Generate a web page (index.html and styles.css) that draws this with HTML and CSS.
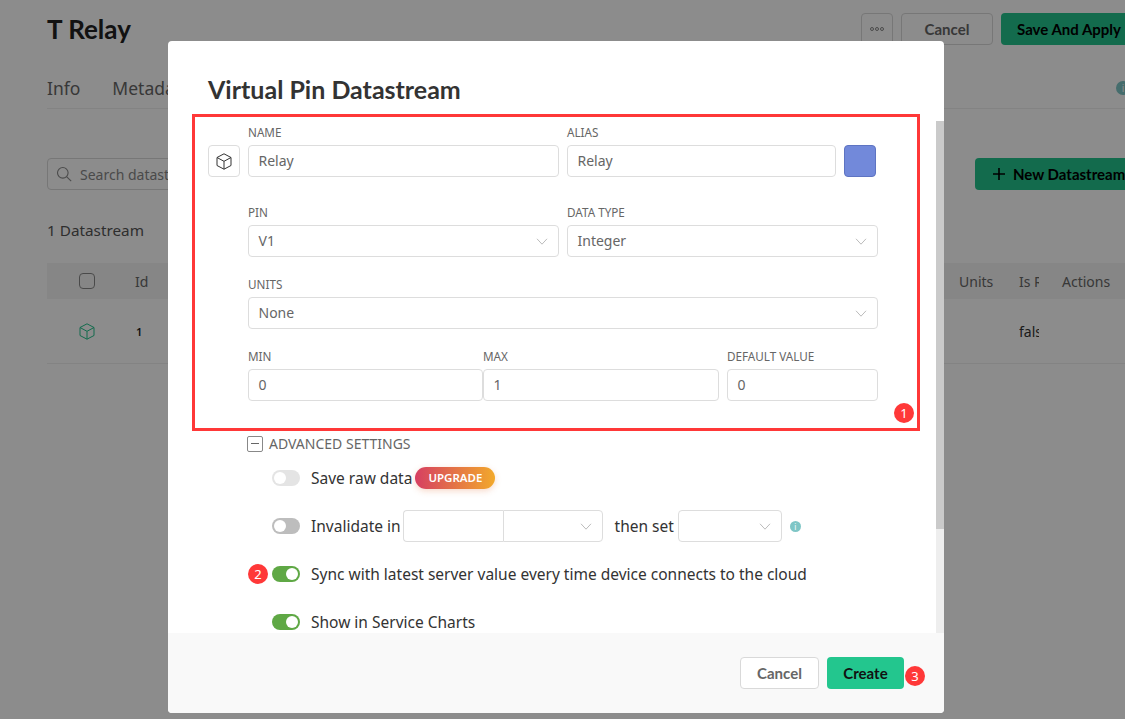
FILE: index.html
```html
<!DOCTYPE html>
<html lang="en">
<head>
  <meta charset="UTF-8" />
  <meta name="viewport" content="width=device-width, initial-scale=1" />
  <title>Virtual Pin Datastream</title>
  <link rel="stylesheet" href="styles.css">
</head>
<body>
  <div class="page">
    <div class="top-bar">
      <h1>T Relay</h1>
      <div class="top-actions">
        <button class="btn btn-more"><span class="dot"></span><span class="dot"></span><span class="dot"></span></button>
        <button class="btn btn-cancel-top">Cancel</button>
        <button class="btn btn-primary btn-save">Save And Apply</button>
      </div>
    </div>

    <div class="tabs">
      <span class="tab">Info</span>
      <span class="tab">Metadata</span>
      <span class="tab-info">i</span>
    </div>

    <div class="tools">
      <div class="search">
        <svg width="16" height="16" viewBox="0 0 16 16" fill="none" stroke="#8a8a8a" stroke-width="1.1"><circle cx="6.8" cy="6.8" r="5.3"/><path d="M10.8 10.8l4.4 4.4"/></svg>
        <span>Search datastreams</span>
      </div>
      <button class="btn btn-primary btn-new">
        <svg width="12" height="12" viewBox="0 0 12 12" stroke="#000" stroke-width="1.6"><path d="M6 0v12M0 6h12"/></svg>
        New Datastream
      </button>
    </div>

    <div class="count">1 Datastream</div>

    <div class="table-row table-head">
      <div class="col-check"><span class="check"></span></div>
      <div class="col-id">Id</div>
      <div class="col-units">Units</div>
      <div class="col-is">Is Raw</div>
      <div class="col-actions">Actions</div>
    </div>
    <div class="table-row table-body">
      <div class="col-check">
        <svg class="cube" width="16" height="17" viewBox="0 0 16 17" fill="none" stroke="#23c38c" stroke-width="1"><path d="M8 .8l7 3.7v8L8 16.2 1 12.5v-8zM1 4.5l7 3.8 7-3.8M8 8.3v7.9"/></svg>
      </div>
      <div class="col-id cell-num">1</div>
      <div class="col-units"></div>
      <div class="col-is">false</div>
      <div class="col-actions"></div>
    </div>
  </div>

  <div class="overlay"></div>

  <div class="modal">
    <h2 class="modal-title">Virtual Pin Datastream</h2>

    <div class="modal-scroll">
      <div class="form">
        <div class="form-row row-name">
          <button class="icon-pick">
            <svg width="16" height="17" viewBox="0 0 16 17" fill="none" stroke="#333" stroke-width="1"><path d="M8 .8l7 3.7v8L8 16.2 1 12.5v-8zM1 4.5l7 3.8 7-3.8M8 8.3v7.9"/></svg>
          </button>
          <div class="field w-name">
            <label>Name</label>
            <div class="input">Relay</div>
          </div>
          <div class="field w-alias">
            <label>Alias</label>
            <div class="input">Relay</div>
          </div>
          <div class="swatch"></div>
        </div>

        <div class="form-row row-pin">
          <div class="field w-half">
            <label>Pin</label>
            <div class="input select">V1
              <svg class="chev" width="12" height="7" viewBox="0 0 12 7" fill="none" stroke="#bbb"><path d="M1 .8l5 5.4 5-5.4"/></svg>
            </div>
          </div>
          <div class="field w-half">
            <label>Data Type</label>
            <div class="input select">Integer
              <svg class="chev" width="12" height="7" viewBox="0 0 12 7" fill="none" stroke="#bbb"><path d="M1 .8l5 5.4 5-5.4"/></svg>
            </div>
          </div>
        </div>

        <div class="form-row row-units">
          <div class="field w-full">
            <label>Units</label>
            <div class="input select">None
              <svg class="chev" width="12" height="7" viewBox="0 0 12 7" fill="none" stroke="#bbb"><path d="M1 .8l5 5.4 5-5.4"/></svg>
            </div>
          </div>
        </div>

        <div class="form-row row-range">
          <div class="field w-min">
            <label>Min</label>
            <div class="input">0</div>
          </div>
          <div class="field w-max">
            <label>Max</label>
            <div class="input">1</div>
          </div>
          <div class="field w-default">
            <label>Default Value</label>
            <div class="input">0</div>
          </div>
        </div>

        <div class="advanced">
          <span class="collapse"></span>
          <span class="advanced-text">ADVANCED SETTINGS</span>
        </div>

        <div class="option">
          <span class="toggle toggle-disabled"></span>
          <span class="option-text">Save raw data</span>
          <span class="upgrade">UPGRADE</span>
        </div>
        <div class="option">
          <span class="toggle toggle-off"></span>
          <span class="option-text">Invalidate in</span>
          <div class="input w-inv joined-left"></div>
          <div class="input select w-inv joined-right">
            <svg class="chev" width="12" height="7" viewBox="0 0 12 7" fill="none" stroke="#bbb"><path d="M1 .8l5 5.4 5-5.4"/></svg>
          </div>
          <span class="option-text then-set">then set</span>
          <div class="input select w-then">
            <svg class="chev" width="12" height="7" viewBox="0 0 12 7" fill="none" stroke="#bbb"><path d="M1 .8l5 5.4 5-5.4"/></svg>
          </div>
          <span class="info-dot">i</span>
        </div>
        <div class="option">
          <span class="toggle toggle-on"></span>
          <span class="option-text">Sync with latest server value every time device connects to the cloud</span>
        </div>
        <div class="option">
          <span class="toggle toggle-on"></span>
          <span class="option-text">Show in Service Charts</span>
        </div>
      </div>
      <div class="scrollbar"><div class="scrollbar-thumb"></div></div>
    </div>

    <div class="modal-footer">
      <button class="btn btn-cancel">Cancel</button>
      <button class="btn btn-create">Create</button>
    </div>
  </div>

  <!-- red annotations on top of the screenshot -->
  <div class="mark-box"></div>
  <span class="mark mark-1">1</span>
  <span class="mark mark-2">2</span>
  <span class="mark mark-3">3</span>
</body>
</html>
```

FILE: styles.css
```css
* {
  box-sizing: border-box;
}
html, body {
  margin: 0;
  height: 719px;
  overflow: hidden;
}
body {
  font-family: "Noto Sans", sans-serif;
  font-size: 14px;
  color: #333;
  background: #fff;
  position: relative;
}
button {
  font-family: inherit;
}

/* page behind the dialog */
.page {
  width: 1141px;
  padding: 13px 0 0 47px;
}
.top-bar {
  display: flex;
  justify-content: space-between;
  align-items: center;
  height: 32px;
}
h1 {
  margin: 0;
  font-family: Lato, sans-serif;
  font-size: 26px;
  font-weight: 700;
  color: #222;
}
.top-actions {
  display: flex;
  gap: 8px;
}
.btn {
  height: 32px;
  border-radius: 4px;
  font-family: Lato, sans-serif;
  font-size: 15px;
  font-weight: 700;
  padding: 0;
}
.btn-more {
  width: 32px;
  background: #fff;
  border: 1px solid #d9d9d9;
  display: flex;
  align-items: center;
  justify-content: center;
  gap: 1px;
}
.dot {
  width: 4px;
  height: 4px;
  border: 1px solid #888;
  border-radius: 50%;
}
.btn-cancel-top {
  width: 92px;
  background: #fff;
  border: 1px solid #d9d9d9;
  color: #666;
}
.btn-primary {
  background: #23c38c;
  border: none;
  color: #000;
}
.btn-save {
  width: 140px;
  padding-right: 4px;
}
.tabs {
  display: flex;
  align-items: center;
  gap: 32px;
  height: 64px;
  padding-top: 22px;
  border-bottom: 1px solid #eee;
  font-size: 17.5px;
  color: #666;
}
.tab-info {
  margin-left: auto;
  margin-right: 11px;
  width: 14px;
  height: 14px;
  border-radius: 50%;
  background: #7fc6c6;
  color: #fff;
  font-size: 10px;
  text-align: center;
  line-height: 14px;
}
.tools {
  display: flex;
  justify-content: space-between;
  margin-top: 49px;
}
.search {
  width: 400px;
  height: 32px;
  border: 1px solid #d9d9d9;
  border-radius: 4px;
  display: flex;
  align-items: center;
  gap: 8px;
  padding-left: 8px;
  color: #888;
}
.btn-new {
  width: 166px;
  display: flex;
  align-items: center;
  gap: 8px;
  padding-left: 18px;
}
.count {
  margin-top: 29px;
  height: 22px;
  line-height: 22px;
  font-size: 15.3px;
  color: #555;
}
.table-row {
  display: flex;
  align-items: center;
}
.table-head {
  margin-top: 22px;
  height: 36px;
  background: #f4f4f4;
  color: #666;
}
.table-body {
  height: 65px;
  padding-top: 1px;
  border-bottom: 1px solid #eee;
}
.col-check {
  width: 88px;
  padding-left: 32px;
  display: flex;
  align-items: center;
}
.col-id {
  width: 824px;
}
.cell-num {
  font-size: 11px;
  font-weight: 600;
  color: #222;
  padding-left: 1px;
}
.col-units {
  width: 60px;
}
.col-is {
  width: 20px;
  margin-right: 23px;
  overflow: hidden;
  white-space: nowrap;
}
.check {
  width: 16px;
  height: 16px;
  border: 1px solid #888;
  border-radius: 4px;
}
.table-body .col-is {
  color: #333;
}

.overlay {
  position: absolute;
  inset: 0;
  background: rgba(0, 0, 0, 0.45);
}

/* dialog */
.modal {
  position: absolute;
  left: 168px;
  top: 41px;
  width: 776px;
  height: 672px;
  background: #fff;
  border-radius: 4px;
  display: flex;
  flex-direction: column;
  overflow: hidden;
}
.modal-title {
  margin: 0;
  height: 80px;
  padding: 31px 0 0 40px;
  font-family: Lato, sans-serif;
  font-size: 25px;
  line-height: 34px;
  font-weight: 700;
  color: #333;
}
.modal-scroll {
  height: 512px;
  overflow: hidden;
  position: relative;
}
.scrollbar {
  position: absolute;
  right: 0;
  top: 0;
  width: 8px;
  height: 512px;
  background: #eee;
}
.scrollbar-thumb {
  height: 408px;
  background: #cacaca;
}
.form {
  height: 642px;
  padding: 4px 0 0 40px;
}
.form-row {
  display: flex;
  gap: 8px;
  width: 670px;
  padding-left: 40px;
}
.row-name {
  padding-left: 0;
  align-items: flex-end;
}
.row-pin {
  margin-top: 28px;
}
.row-units,
.row-range {
  margin-top: 20px;
}
.field label {
  display: block;
  height: 15px;
  line-height: 15px;
  margin-bottom: 5px;
  font-size: 11.7px;
  color: #666;
  text-transform: uppercase;
}
.input {
  height: 32px;
  line-height: 30px;
  border: 1px solid #ddd;
  border-radius: 4px;
  padding: 0 9.5px;
  color: #666;
  background: #fff;
}
.select {
  position: relative;
}
.chev {
  position: absolute;
  right: 10px;
  top: 12px;
}
.icon-pick {
  width: 32px;
  height: 32px;
  padding: 0;
  background: #fff;
  border: 1px solid #ddd;
  border-radius: 4px;
  display: flex;
  align-items: center;
  justify-content: center;
}
.w-name {
  width: 311px;
}
.w-alias {
  width: 269px;
}
.swatch {
  width: 32px;
  height: 32px;
  background: #7289da;
  border: 1px solid #5e74c2;
  border-radius: 4px;
}
.w-half {
  width: 311px;
}
.w-full {
  width: 630px;
}
.w-min {
  width: 235px;
  margin-right: -8px;
}
.w-max {
  width: 236px;
}
.w-default {
  width: 151px;
}
.advanced {
  display: flex;
  align-items: center;
  gap: 6px;
  height: 16px;
  margin: 35px 0 10px 39px;
  color: #666;
}
.advanced-text {
  margin-top: -2px;
}
.collapse {
  width: 16px;
  height: 16px;
  border: 1px solid #888;
  border-radius: 2px;
  position: relative;
}
.collapse::after {
  content: "";
  position: absolute;
  left: 3px;
  right: 3px;
  top: 6px;
  height: 1px;
  background: #666;
}
.option {
  display: flex;
  align-items: center;
  height: 32px;
  margin: 0 0 16px 64px;
}
.toggle {
  width: 28px;
  height: 16px;
  border-radius: 8px;
  margin-right: 11px;
  position: relative;
  flex: none;
}
.toggle::after {
  content: "";
  position: absolute;
  top: 2px;
  left: 2px;
  width: 12px;
  height: 12px;
  border-radius: 50%;
  background: #fff;
}
.toggle-disabled {
  background: #e4e4e4;
}
.toggle-off {
  background: #bdbdbd;
}
.toggle-on {
  background: #5fa845;
}
.toggle-on::after {
  left: 14px;
}
.option-text {
  font-size: 15.5px;
  color: #333;
  white-space: nowrap;
}
.upgrade {
  margin-left: 3px;
  width: 80px;
  height: 22px;
  line-height: 22px;
  border-radius: 11px;
  text-align: center;
  font-size: 11.5px;
  font-weight: 600;
  color: #fff;
  background: linear-gradient(90deg, #d63f62, #f2a92b);
  box-shadow: 0 2px 6px rgba(230, 130, 80, 0.3);
}
.w-inv {
  width: 100px;
  flex: none;
}
.joined-left {
  margin-left: 2px;
  border-radius: 4px 0 0 4px;
  border-right: none;
}
.joined-right {
  border-radius: 0 4px 4px 0;
}
.then-set {
  margin: 0 4px 0 12px;
}
.w-then {
  width: 104px;
  flex: none;
}
.info-dot {
  margin-left: 8px;
  width: 11px;
  height: 11px;
  border-radius: 50%;
  background: #7fc6c6;
  color: #fff;
  font-size: 8px;
  line-height: 11px;
  text-align: center;
}
.modal-footer {
  height: 80px;
  background: #f9f9f9;
  display: flex;
  justify-content: flex-end;
  align-items: center;
  gap: 8px;
  padding-right: 40px;
}
.btn-cancel {
  width: 79px;
  background: #fff;
  border: 1px solid #d9d9d9;
  color: #666;
}
.btn-create {
  width: 77px;
  background: #23c68e;
  border: none;
  color: #111;
}

/* annotations */
.mark-box {
  position: absolute;
  left: 192px;
  top: 114px;
  width: 728px;
  height: 317px;
  border: 3px solid #ff3838;
}
.mark {
  position: absolute;
  width: 20px;
  height: 20px;
  border-radius: 50%;
  background: #ff3838;
  color: #fff;
  font-size: 13px;
  line-height: 20px;
  text-align: center;
}
.mark-1 {
  left: 894px;
  top: 403px;
}
.mark-2 {
  left: 248px;
  top: 564px;
}
.mark-3 {
  left: 905px;
  top: 666px;
}
```
